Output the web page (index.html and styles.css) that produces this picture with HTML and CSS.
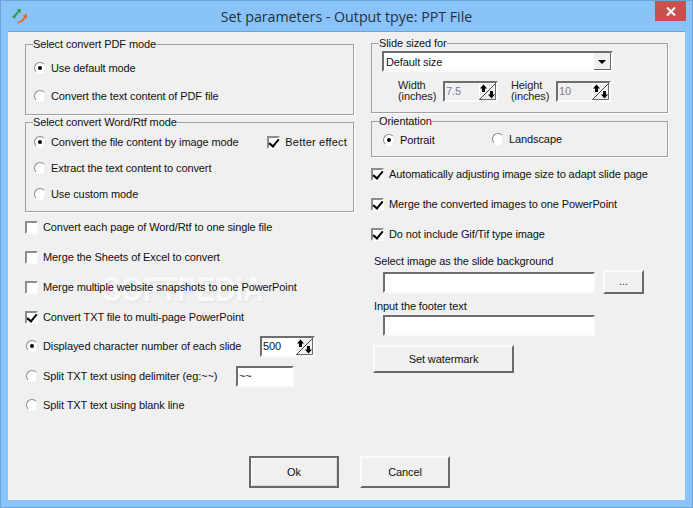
FILE: index.html
```html
<!DOCTYPE html>
<html lang="en">
<head>
    <meta charset="UTF-8">
    <title>Set parameters</title>
    <link rel="stylesheet" href="styles.css">
</head>
<body>
    <svg class="defs" width="0" height="0">
        <symbol id="spin" viewBox="0 0 17 17">
            <rect x="0" y="0" width="17" height="17" fill="#f0f0f0"/>
            <path d="M0 0.5 H17 M0.5 0 V17" stroke="#fff" fill="none"/>
            <path d="M16.5 0 V16.5 H0" stroke="#696969" fill="none"/>
            <path d="M0.5 16.5 L16.5 0.5" stroke="#444" fill="none"/>
            <path d="M4.5 1.5 L8 5.5 L6 5.5 L6 9 L3 9 L3 5.5 L1 5.5 Z" fill="#000"/>
            <path d="M12.5 15.5 L9 11.5 L11 11.5 L11 8 L14 8 L14 11.5 L16 11.5 Z" fill="#000"/>
        </symbol>
    </svg>
    <div class="window">
        <header class="titlebar">
            <svg class="app-icon" width="17" height="15" viewBox="0 0 17 15">
                <path d="M1 9 L7 3 L5.5 1.5 L10 1 L9.5 5 L8 4 L3.5 10.5 Z" fill="#2f9a3a"/>
                <path d="M6 14 C10 13 12 11 13 8.5 L11.5 7.5 L16 6 L16 11 L14.5 10 C13 13 10 15 6.5 15 Z" fill="#ee6a1f"/>
            </svg>
            <span class="title">Set parameters - Output tpye: PPT File</span>
            <span class="close">
                <svg width="10" height="9" viewBox="0 0 10 9"><path d="M1 0.5 L9 8.5 M9 0.5 L1 8.5" stroke="#fff" stroke-width="2"/></svg>
            </span>
        </header>
        <main class="client">
            <div class="stamp">SOFTPEDIA</div>
            <div class="columns">
                <section class="col-left">
                    <div class="group group-pdf">
                        <span class="legend">Select convert PDF mode</span>
                        <label class="row row-28"><i class="radio on"></i>Use default mode</label>
                        <label class="row row-28"><i class="radio"></i>Convert the text content of PDF file</label>
                    </div>
                    <div class="group group-word">
                        <span class="legend">Select convert Word/Rtf mode</span>
                        <div class="row row-26">
                            <label class="opt"><i class="radio on"></i>Convert the file content by image mode</label>
                            <label class="opt better"><i class="check on"></i>Better effect</label>
                        </div>
                        <label class="row row-26"><i class="radio"></i>Extract the text content to convert</label>
                        <label class="row row-26"><i class="radio"></i>Use custom mode</label>
                    </div>
                    <div class="list">
                        <label class="row row-30"><i class="check"></i>Convert each page of Word/Rtf to one single file</label>
                        <label class="row row-30"><i class="check"></i>Merge the Sheets of Excel to convert</label>
                        <label class="row row-30"><i class="check"></i>Merge multiple website snapshots to one PowerPoint</label>
                        <label class="row row-30"><i class="check on"></i>Convert TXT file to multi-page PowerPoint</label>
                        <div class="row row-29 lift">
                            <label class="opt opt-chars"><i class="radio on"></i>Displayed character number of each slide</label>
                            <span class="spinner"><span class="val">500</span><svg class="spin-btn"><use href="#spin"/></svg></span>
                        </div>
                        <div class="row row-30">
                            <label class="opt opt-delim"><i class="radio"></i>Split TXT text using delimiter (eg:~~)</label>
                            <span class="input input-delim">~~</span>
                        </div>
                        <label class="row row-29 lift"><i class="radio"></i>Split TXT text using blank line</label>
                    </div>
                </section>
                <section class="col-right">
                    <div class="group group-slide">
                        <span class="legend">Slide sized for</span>
                        <div class="select"><span class="val">Default size</span><span class="select-btn"></span></div>
                        <div class="sizes">
                            <span class="size-label">Width<br>(inches)</span>
                            <span class="spinner off"><span class="val">7.5</span><svg class="spin-btn"><use href="#spin"/></svg></span>
                            <span class="size-label label-h">Height<br>(inches)</span>
                            <span class="spinner off"><span class="val">10</span><svg class="spin-btn"><use href="#spin"/></svg></span>
                        </div>
                    </div>
                    <div class="group group-orient">
                        <span class="legend">Orientation</span>
                        <label class="opt opt-portrait"><i class="radio on"></i>Portrait</label>
                        <label class="opt opt-landscape"><i class="radio"></i>Landscape</label>
                    </div>
                    <div class="list-right">
                        <label class="row row-30"><i class="check on"></i>Automatically adjusting image size to adapt slide page</label>
                        <label class="row row-30"><i class="check on"></i>Merge the converted images to one PowerPoint</label>
                        <label class="row row-30"><i class="check on"></i>Do not include Gif/Tif type image</label>
                    </div>
                    <div class="field-label first">Select image as the slide background</div>
                    <div class="field">
                        <span class="input input-wide"></span>
                        <span class="btn btn-dots">...</span>
                    </div>
                    <div class="field-label">Input the footer text</div>
                    <div class="field">
                        <span class="input input-wide"></span>
                    </div>
                    <span class="btn btn-mark">Set watermark</span>
                </section>
            </div>
            <footer class="actions">
                <span class="btn btn-ok">Ok</span>
                <span class="btn btn-cancel">Cancel</span>
            </footer>
        </main>
    </div>
</body>
</html>
```

FILE: styles.css
```css
* { box-sizing: border-box; }
html, body { margin: 0; height: 100%; }
body {
    font-family: "Liberation Sans", Arial, sans-serif;
    font-size: 11px;
    letter-spacing: -0.1px;
    color: #111;
    overflow: hidden;
}
.defs { position: absolute; }
.window {
    width: 693px;
    height: 508px;
    background: #8ac3f9;
    border: 1px solid #6fa3d3;
    display: flex;
    flex-direction: column;
}

/* title bar */
.titlebar {
    height: 30px;
    display: flex;
    position: relative;
    justify-content: center;
    align-items: center;
    flex-shrink: 0;
}
.title {
    font-family: "Open Sans", sans-serif;
    font-size: 14.2px;
    letter-spacing: 0;
    color: #23303c;
    margin-top: 1px;
}
.app-icon { position: absolute; left: 10px; top: 7px; }
.close {
    position: absolute;
    right: 6px;
    top: 0;
    width: 31px;
    height: 20px;
    background: #c75050;
    display: flex;
    align-items: center;
    justify-content: center;
}

/* client area */
.client {
    position: relative;
    margin: 0 7px 7px;
    flex: 1;
    background: #f0f0f0;
    border-top: 1px solid #6fa3d3;
    padding: 12px 17px 12px 17px;
    display: flex;
    flex-direction: column;
}
.columns { display: flex; flex: 1; position: relative; }
.col-left { width: 329px; }
.col-right { width: 297px; margin-left: 17px; margin-top: -1px; }

.group {
    position: relative;
    border: 1px solid #a0a0a0;
    box-shadow: 1px 1px 0 #fff;
}
.legend {
    position: absolute;
    top: -7px;
    left: 7px;
    background: #f0f0f0;
    line-height: 13px;
}
.group-pdf { height: 71px; padding: 9px 0 0 8px; }
.group-word { height: 90px; margin-top: 7px; padding: 6px 6px 0 8px; }

.row { display: flex; align-items: center; white-space: nowrap; }
.row-26 { height: 26px; }
.row-28 { height: 28px; }
.row-29 { height: 29px; }
.row-30 { height: 30px; }
.lift { padding-bottom: 1px; }
.opt { display: flex; align-items: center; white-space: nowrap; }
.better { margin-left: auto; letter-spacing: 0.2px; }
.opt-chars { width: 235px; }
.opt-delim { width: 211px; }

.radio, .check { display: block; flex-shrink: 0; position: relative; }
.radio {
    width: 12px;
    height: 12px;
    margin-right: 5px;
    border-radius: 50%;
    background: #fff;
    border: 1px solid;
    border-color: #8a8a8a #e8e8e8 #fff #8a8a8a;
}
.radio.on::after {
    content: "";
    position: absolute;
    left: 3px;
    top: 3px;
    width: 4px;
    height: 4px;
    border-radius: 50%;
    background: #000;
}
.check {
    width: 13px;
    height: 13px;
    margin-right: 5px;
    background: #fff;
    border: 2px solid;
    border-color: #8c8c8c #fbfbfb #fbfbfb #8c8c8c;
}
.check.on::after {
    content: "";
    position: absolute;
    left: 2px;
    top: -1px;
    width: 4px;
    height: 8px;
    border: solid #000;
    border-width: 0 2px 2px 0;
    transform: rotate(40deg);
}

.list .radio { margin-left: 1px; margin-right: 5px; }

/* inputs */
.input, .select, .spinner {
    display: flex;
    background: #fff;
    border: 2px solid;
    border-color: #6e6e6e #fbfbfb #fbfbfb #6e6e6e;
}
.input { height: 21px; align-items: center; padding-left: 1px; }
.input-delim { width: 58px; }
.input-wide { width: 212px; }
.spinner {
    width: 55px;
    height: 21px;
    align-items: center;
    justify-content: space-between;
    padding-left: 1px;
}
.spinner.off { background: #f0f0f0; color: #7d7d9a; }
.spin-btn { width: 17px; height: 17px; flex-shrink: 0; }

.select {
    width: 231px;
    height: 21px;
    margin: 7px 0 0 10px;
    align-items: center;
    justify-content: space-between;
    padding-left: 2px;
}
.select-btn {
    width: 17px;
    height: 17px;
    background: #f0f0f0;
    border-right: 1px solid #696969;
    border-bottom: 1px solid #696969;
    position: relative;
}
.select-btn::after {
    content: "";
    position: absolute;
    left: 4px;
    top: 7px;
    border: 4px solid transparent;
    border-top: 4px solid #000;
    border-bottom: 0;
}

.group-slide { height: 70px; }
.sizes { display: flex; align-items: center; margin: 8px 0 0 26px; }
.size-label { width: 45px; line-height: 11px; color: #222; }
.label-h { margin-left: 13px; }
.group-orient {
    height: 36px;
    margin-top: 8px;
    display: flex;
    align-items: center;
    padding: 2px 0 0 11px;
}
.opt-portrait { width: 109px; }
.opt-landscape { margin-bottom: 2px; }
.list-right { margin-top: 2px; }
.field-label { margin: 6px 0 0 3px; line-height: 13px; }
.field-label.first { margin-top: 6px; }
.field { display: flex; align-items: center; margin: 2px 0 0 12px; }

/* buttons */
.btn {
    display: flex;
    align-items: center;
    justify-content: center;
    background: #f0f0f0;
    border: 2px solid;
    border-color: #fbfbfb #696969 #696969 #fbfbfb;
    color: #111;
}
.btn-dots { width: 41px; height: 24px; margin-left: 8px; padding-bottom: 2px; color: #502060; }
.btn-mark { width: 141px; height: 28px; margin: 9px 0 0 2px; }
.actions { display: flex; padding-left: 224px; }
.btn-ok {
    width: 90px;
    height: 32px;
    border-color: #696969;
    box-shadow: inset 1px 1px 0 #fff, inset -1px -1px 0 #d8d8d8;
}
.btn-cancel { width: 90px; height: 32px; margin-left: 21px; }

/* watermark */
.stamp {
    position: absolute;
    left: 94px;
    top: 241px;
    font-size: 29px;
    font-weight: bold;
    letter-spacing: -0.5px;
    color: #fff;
    opacity: 0.6;
    transform: scaleY(1.2);
    text-shadow: 1px 1px 2px rgba(0, 0, 0, 0.1);
    pointer-events: none;
}
```
